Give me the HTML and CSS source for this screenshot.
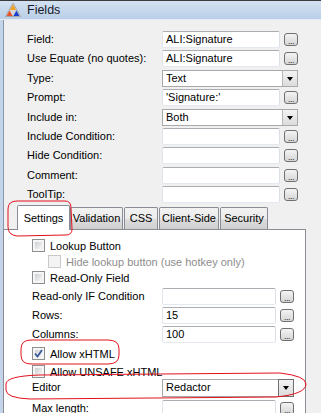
FILE: index.html
```html
<!DOCTYPE html>
<html lang="en">
<head>
    <meta charset="UTF-8">
    <title>Fields</title>
    <link rel="stylesheet" href="styles.css">
</head>
<body>
    <div class="window">
        <div class="titlebar">
            <svg class="app-icon" width="16" height="14" viewBox="0 0 16 14">
                <polygon points="8,0 15.5,13.5 0.5,13.5" fill="#d8d8d8" stroke="#9a9a9a" stroke-width="0.8"/>
                <polygon points="8,1.5 11,7 5,7" fill="#f0a020"/>
                <polygon points="4.6,7.6 7.6,13 1.6,13" fill="#e8502a"/>
                <polygon points="11.4,7.6 14.4,13 8.4,13" fill="#1a3fd0"/>
            </svg>
            <span class="title">Fields</span>
        </div>

        <div class="client">
            <!-- Field properties -->
            <div class="form main-form">
                <span class="lbl">Field:</span>
                <div class="edit">ALI:Signature</div>
                <span class="dots">...</span>

                <span class="lbl">Use Equate (no quotes):</span>
                <div class="edit">ALI:Signature</div>
                <span class="dots">...</span>

                <span class="lbl">Type:</span>
                <div class="combo wide"><span>Text</span><i class="drop"></i></div>

                <span class="lbl">Prompt:</span>
                <div class="edit">'Signature:'</div>
                <span class="dots">...</span>

                <span class="lbl">Include in:</span>
                <div class="combo wide"><span>Both</span><i class="drop"></i></div>

                <span class="lbl">Include Condition:</span>
                <div class="edit"></div>
                <span class="dots">...</span>

                <span class="lbl">Hide Condition:</span>
                <div class="edit"></div>
                <span class="dots">...</span>

                <span class="lbl">Comment:</span>
                <div class="edit"></div>
                <span class="dots">...</span>

                <span class="lbl">ToolTip:</span>
                <div class="edit"></div>
                <span class="dots">...</span>
            </div>

            <!-- Tabs -->
            <div class="tabstrip">
                <div class="tab active">Settings</div>
                <div class="tab t-validation">Validation</div>
                <div class="tab t-css">CSS</div>
                <div class="tab t-client">Client-Side</div>
                <div class="tab t-security">Security</div>
            </div>

            <div class="page">
                <div class="checks">
                    <label class="check"><i class="box"></i>Lookup Button</label>
                    <label class="check sub disabled"><i class="box"></i>Hide lookup button (use hotkey only)</label>
                    <label class="check"><i class="box"></i>Read-Only Field</label>
                </div>

                <div class="form page-form">
                    <span class="lbl">Read-only IF Condition</span>
                    <div class="edit"></div>
                    <span class="dots">...</span>

                    <span class="lbl">Rows:</span>
                    <div class="edit">15</div>
                    <span class="dots">...</span>

                    <span class="lbl">Columns:</span>
                    <div class="edit">100</div>
                    <span class="dots">...</span>
                </div>

                <div class="checks lower">
                    <label class="check"><i class="box checked">
                        <svg width="9" height="9" viewBox="0 0 9 9"><path d="M1 4.5 L3.5 7.5 L8 1" fill="none" stroke="#3c5a9c" stroke-width="1.8"/></svg>
                    </i>Allow xHTML</label>
                    <label class="check"><i class="box"></i>Allow UNSAFE xHTML</label>
                </div>

                <div class="form page-form editor">
                    <span class="lbl">Editor</span>
                    <div class="combo wide"><span>Redactor</span><i class="drop hot"></i></div>

                    <span class="lbl">Max length:</span>
                    <div class="edit"></div>
                    <span class="dots">...</span>
                </div>
            </div>
        </div>

        <!-- Red annotation marks -->
        <svg class="marks" width="321" height="413" viewBox="0 0 321 413">
            <path d="M17 200 L65 200 Q71 200 71 207 L72 228 Q72 234 66 234 L17 235 Q8 234 8 226 L8 208 Q8 200 17 200 Z"/>
            <path d="M31 339 L108 339 Q119 339 119 348 L119 354 Q119 363 108 363 L31 363 Q21 363 21 354 L21 348 Q21 339 31 339 Z"/>
            <path d="M40 374 L280 372 Q306 375 306 383 Q306 393 276 396 L30 398 Q6 397 6 389 L6 383 Q6 375 40 374 Z"/>
        </svg>
    </div>
</body>
</html>
```

FILE: styles.css
```css
* {
    margin: 0;
    padding: 0;
    box-sizing: border-box;
}

body {
    font-family: 'Liberation Sans', Arial, sans-serif;
    font-size: 11px;
    color: #000;
    background: #f0f0f0;
}

.window {
    position: relative;
    width: 321px;
    height: 413px;
    overflow: hidden;
    background: #f0f0f0;
    border-top: 1px solid #3c3c3c;
}

/* Title bar */
.titlebar {
    height: 19px;
    display: flex;
    align-items: center;
    gap: 6px;
    padding-left: 5px;
    background: linear-gradient(#d3e1f1, #b9cfe8);
    border-bottom: 1px solid #e4ebf4;
}

.app-icon {
    flex: none;
}

.title {
    font-family: 'Liberation Sans', Arial, sans-serif;
    font-size: 12.5px;
    color: #1a1a2a;
}

/* Client area */
.client {
    height: 393px;
    border-left: 3px solid #c4d5e9;
    box-shadow: inset 1px 0 0 #8796aa;
    padding-top: 11px;
}

.form {
    display: grid;
    grid-template-columns: 135px 118px 18px;
    grid-auto-rows: 17px;
    row-gap: 2.375px;
    align-items: center;
}

.main-form {
    margin-left: 24px;
}

.lbl {
    white-space: nowrap;
    line-height: 17px;
}

.edit {
    height: 17px;
    line-height: 15px;
    padding-left: 3px;
    background: #fff;
    border: 1px solid #abadb3;
    border-left-color: #e2e3ea;
    border-right-color: #dbdfe6;
    border-bottom-color: #e3e9ef;
    border-radius: 2px;
    white-space: nowrap;
    overflow: hidden;
}

.dots {
    justify-self: end;
    width: 14px;
    height: 13px;
    border: 1px solid #707070;
    border-radius: 3px;
    background: linear-gradient(#f4f4f4, #e4e4e4 50%, #d6d6d6);
    font-size: 9px;
    line-height: 14px;
    text-align: center;
    letter-spacing: -0.5px;
    color: #333;
    overflow: hidden;
}

.combo {
    height: 17px;
    display: flex;
    align-items: stretch;
    background: #fff;
    border: 1px solid #a9a9a9;
}

.combo.wide {
    grid-column: 2 / 4;
}

.combo span {
    flex: 1;
    line-height: 15px;
    padding-left: 3px;
}

.drop {
    width: 15px;
    position: relative;
    background: linear-gradient(#f3f3f3, #dcdcdc);
    border-left: 1px solid #b9b9b9;
}

.drop::after {
    content: '';
    position: absolute;
    left: 4px;
    top: 6px;
    border-left: 3.5px solid transparent;
    border-right: 3.5px solid transparent;
    border-top: 4px solid #000;
}

.drop.hot {
    border: 1px solid #707070;
    margin: -1px -1px -1px 0;
    width: 16px;
}

/* Tabs */
.tabstrip {
    display: flex;
    align-items: flex-end;
    height: 24px;
    margin-top: 2px;
    padding-left: 14px;
}

.tab {
    height: 22px;
    line-height: 21px;
    text-align: center;
    border: 1px solid #898c95;
    border-bottom: none;
    border-radius: 2px 2px 0 0;
    background: linear-gradient(#f2f2f2, #ebebeb 50%, #dddddd 51%, #cfcfcf);
}

.tab.active {
    width: 53px;
    height: 25px;
    line-height: 24px;
    margin-bottom: -1px;
    background: #fff;
    position: relative;
    z-index: 1;
}

.t-validation { width: 53px; }
.t-css { width: 34px; margin-left: 1px; }
.t-client { width: 60px; margin-left: 1px; }
.t-security { width: 48px; margin-left: 1px; }

.page {
    width: 303px;
    height: 200px;
    background: #fff;
    border: 1px solid #898c95;
    padding: 9px 0 0 28px;
}

.checks {
    display: flex;
    flex-direction: column;
    gap: 3px;
}

.check {
    display: flex;
    align-items: center;
    gap: 5px;
    height: 13px;
    white-space: nowrap;
}

.check.sub {
    padding-left: 16px;
}

.check.disabled {
    color: #8d8d8d;
}

.box {
    flex: none;
    width: 13px;
    height: 13px;
    padding: 2px;
    border: 1px solid #8e8f8f;
    background: linear-gradient(135deg, #cdd0d5, #f7f7f7) content-box, #f6f6f6;
    display: flex;
    align-items: center;
    justify-content: center;
}

.box svg {
    margin: -2px;
}

.disabled .box {
    border-color: #c9c9c9;
    background: #f4f4f4;
}

.page-form {
    margin-top: 4px;
    grid-template-columns: 130px 114px 18px;
    row-gap: 2px;
}

.checks.lower {
    margin-top: 4px;
    gap: 5px;
}

.editor {
    margin-top: 1px;
    row-gap: 4px;
}

.editor .combo {
    height: 18px;
}

/* Annotation marks */
.marks {
    position: absolute;
    left: 0;
    top: 0;
    pointer-events: none;
    z-index: 5;
}

.marks path {
    fill: none;
    stroke: #e3101c;
    stroke-width: 1;
}
```
